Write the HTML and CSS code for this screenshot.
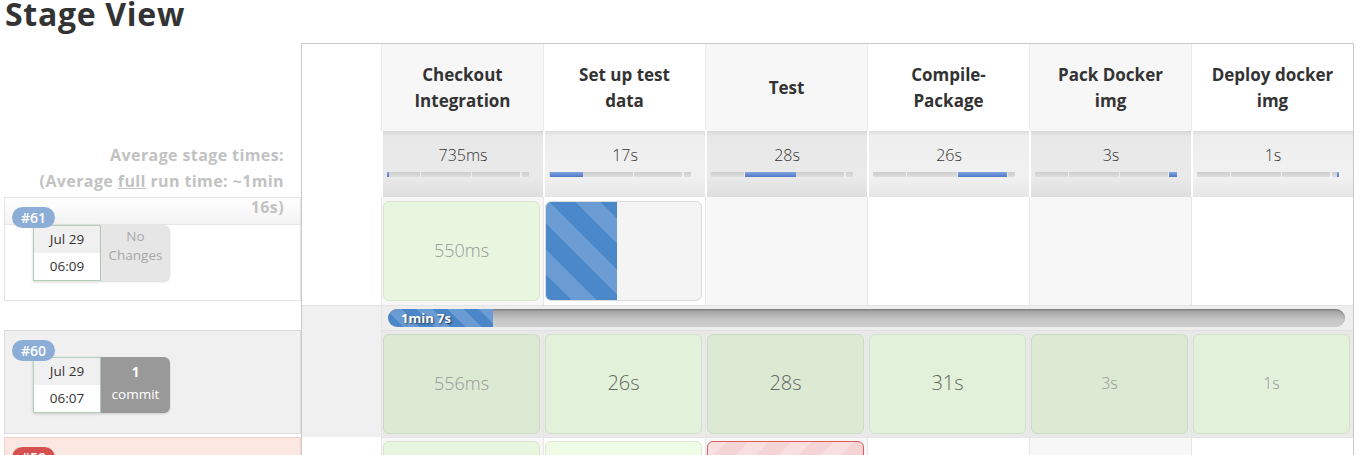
FILE: index.html
```html
<!DOCTYPE html>
<html lang="en">
<head>
<meta charset="utf-8">
<title>Stage View</title>
<link rel="stylesheet" href="styles.css">
</head>
<body>
<h2 class="title">Stage View</h2>
<div class="stage-view">
  <div class="builds">
    <div class="builds-head"></div>
    <div class="avg-label">Average stage times:<br>(Average <u>full</u> run time: ~1min<br>16s)</div>

    <div class="build build-current">
      <span class="badge badge-blue">#61</span>
      <div class="build-band"></div>
      <div class="build-info">
        <div class="date"><div class="day">Jul 29</div><div class="time">06:09</div></div>
        <div class="changes changes-none">No<br>Changes</div>
      </div>
    </div>

    <div class="build build-selected">
      <span class="badge badge-blue">#60</span>
      <div class="build-band"></div>
      <div class="build-info">
        <div class="date"><div class="day">Jul 29</div><div class="time">06:07</div></div>
        <div class="changes changes-some"><b>1</b><br>commit</div>
      </div>
    </div>

    <div class="build build-failed">
      <span class="badge badge-red">#59</span>
      <div class="build-band"></div>
    </div>
  </div>

  <div class="table">
    <!-- header -->
    <div class="lead"></div>
    <div class="th odd">Checkout<br>Integration</div>
    <div class="th">Set up test<br>data</div>
    <div class="th odd">Test</div>
    <div class="th">Compile-<br>Package</div>
    <div class="th odd">Pack Docker<br>img</div>
    <div class="th">Deploy docker<br>img</div>

    <!-- averages -->
    <div class="lead"></div>
    <div class="avg odd">735ms<div class="bar"><span class="fill" style="margin-left:0px;width:2px"></span></div></div>
    <div class="avg">17s<div class="bar"><span class="fill" style="margin-left:1px;width:33px"></span></div></div>
    <div class="avg odd">28s<div class="bar"><span class="fill" style="margin-left:34px;width:51px"></span></div></div>
    <div class="avg">26s<div class="bar"><span class="fill" style="margin-left:85px;width:49px"></span></div></div>
    <div class="avg odd">3s<div class="bar"><span class="fill" style="margin-left:134px;width:8px"></span></div></div>
    <div class="avg">1s<div class="bar"><span class="fill" style="margin-left:140px;width:2px"></span></div></div>

    <!-- #61 -->
    <div class="lead"></div>
    <div class="cell odd"><div class="box ok light t-md t-faint">550ms</div></div>
    <div class="cell"><div class="box running"><span class="run-fill" style="width:71px"></span></div></div>
    <div class="cell odd"></div>
    <div class="cell"></div>
    <div class="cell odd"></div>
    <div class="cell"></div>

    <!-- progress -->
    <div class="lead lead-grey lead-prog"></div>
    <div class="prog-cell">
      <div class="progress"><div class="progress-fill" style="width:105px">1min 7s</div></div>
    </div>

    <!-- #60 -->
    <div class="lead lead-grey"></div>
    <div class="cell sel"><div class="box ok dark t-md t-faint">556ms</div></div>
    <div class="cell sel"><div class="box ok t-lg">26s</div></div>
    <div class="cell sel"><div class="box ok dark t-lg">28s</div></div>
    <div class="cell sel"><div class="box ok t-lg">31s</div></div>
    <div class="cell sel"><div class="box ok dark t-sm t-faint">3s</div></div>
    <div class="cell sel"><div class="box ok t-sm t-faint">1s</div></div>

    <!-- #59 -->
    <div class="lead"></div>
    <div class="cell last odd"><div class="box ok light"></div></div>
    <div class="cell last"><div class="box ok pale"></div></div>
    <div class="cell last odd"><div class="box failed"></div></div>
    <div class="cell last"></div>
    <div class="cell last odd"></div>
    <div class="cell last"></div>
  </div>
</div>
</body>
</html>
```

FILE: styles.css
```css
* { box-sizing: border-box; }

body {
  margin: 0;
  background: #fff;
  color: #333;
  font-family: "Open Sans", "Noto Sans", "Liberation Sans", sans-serif;
  overflow: hidden;
}

.title {
  margin: 0;
  height: 43px;
  padding-left: 5px;
  font-size: 32px;
  line-height: 27px;
  font-weight: 700;
  letter-spacing: 0.7px;
  color: #333;
}

.stage-view {
  display: flex;
  align-items: flex-start;
}

/* ---------- left build column ---------- */
.builds {
  width: 301px;
  flex: none;
}

.builds-head { height: 88px; }

.avg-label {
  position: relative;
  z-index: 1;
  height: 66px;
  padding: 11px 17px 0 0;
  text-align: right;
  white-space: nowrap;
  font-size: 16px;
  line-height: 26px;
  font-weight: 700;
  letter-spacing: 0.4px;
  color: #c2c2c2;
}

.build {
  position: relative;
  height: 104px;
  margin-left: 4px;
  border: 1px solid #e4e4e4;
  background: #fff;
}

.build-band { height: 26px; }

.build-current .build-band {
  height: 27px;
  background: linear-gradient(#fff, #f3f3f3);
  border-bottom: 1px solid #e6e6e6;
}

.build-current { margin-bottom: 29px; }

.build-selected {
  background: #f0f0f0;
  border-color: #dcdcdc;
  margin-bottom: 3px;
}

.build-failed {
  background: #fce8e3;
  border-color: #f1d3cc;
}

.badge {
  position: absolute;
  top: 9px;
  left: 7px;
  z-index: 2;
  height: 21px;
  padding: 0 9px;
  border-radius: 11px;
  color: #fff;
  font-size: 14px;
  line-height: 21px;
  font-weight: 600;
}

.badge-blue { background: #8badd6; }
.badge-red { background: #d65050; }

.build-info {
  display: flex;
  margin-left: 28px;
}

.date {
  width: 68px;
  height: 56px;
  border: 1px solid #b2d0bb;
  box-shadow: 0 1px 3px rgba(0,0,0,0.18);
  font-size: 13.5px;
  line-height: 27px;
  text-align: center;
  color: #333;
  background: #fff;
}

.day { height: 27px; background: #f0f0f0; }

.changes {
  width: 69px;
  height: 56px;
  border-radius: 0 6px 6px 0;
  text-align: center;
  font-size: 13.5px;
  box-shadow: 0 1px 2px rgba(0,0,0,0.15);
}

.changes-none {
  background: #e6e6e6;
  color: #a8a8a8;
  line-height: 19px;
  padding-top: 2px;
}

.changes-some {
  background: #999;
  color: #fff;
  line-height: 22px;
  padding-top: 4px;
}

/* ---------- table ---------- */
.table {
  display: grid;
  grid-template-columns: 79px repeat(6, 162px);
  grid-template-rows: 87px 66px 108px 25px 107px 108px;
  width: 1053px;
  border: 1px solid #cacaca;
  flex: none;
}

.lead { background: #fff; }
.lead-grey { background: #f0f0f0; }
.lead-prog { border-top: 1px solid #e4e4e4; }

.th {
  display: flex;
  align-items: center;
  justify-content: center;
  text-align: center;
  border-left: 1px solid #ebebeb;
  font-size: 17px;
  line-height: 26px;
  font-weight: 700;
  color: #333;
  background: #fff;
}

.th.odd { background: #f7f7f7; }

.avg {
  border-left: 2px solid #fff;
  padding-top: 12px;
  text-align: center;
  font-size: 16px;
  line-height: 24px;
  font-weight: 300;
  color: #333;
  background: linear-gradient(#dcdcdc 0, #eeeeee 5px, #f1f1f1 70%, #e6e6e6 100%);
}

.avg.odd {
  background: linear-gradient(#d6d6d6 0, #e8e8e8 5px, #eaeaea 70%, #dedede 100%);
}

.bar {
  display: flex;
  width: 142px;
  height: 5px;
  margin: 5px 0 0 4px;
  background:
    linear-gradient(90deg, transparent 23%, rgba(255,255,255,0.55) 23%, rgba(255,255,255,0.55) 24%, transparent 24%,
      transparent 59%, rgba(255,255,255,0.55) 59%, rgba(255,255,255,0.55) 60%, transparent 60%,
      transparent 94%, rgba(255,255,255,0.55) 94%, rgba(255,255,255,0.55) 95%, transparent 95%),
    linear-gradient(#cdcdcd, #dedede);
}

.fill {
  display: block;
  height: 5px;
  background: linear-gradient(#83a3e2, #5079c8);
}

.cell {
  border-left: 1px solid #e6e6e6;
  padding: 4px 3px 4px 1px;
  background: #fff;
}

.cell.odd { background: #f7f7f7; }

.cell.sel {
  background: #e9e9e9;
  border-top: 1px solid #e2e2e2;
  padding: 3px 3px 3px 1px;
}

.cell.last {
  border-top: 1px solid #e4e4e4;
  padding-top: 3px;
}

.box {
  height: 100px;
  border: 1px solid #d3e2ca;
  border-radius: 6px;
  display: flex;
  align-items: center;
  justify-content: center;
  padding-bottom: 3px;
  font-weight: 300;
  color: #666;
  background: #e2f1d9;
}

.box.light { background: #e8f6df; border-color: #d6e6cd; }
.box.pale { background: #effde7; border-color: #d9e8d0; }
.box.dark { background: #dce9d3; border-color: #cedbc5; }

.t-sm { font-size: 16px; }
.t-md { font-size: 18px; }
.t-lg { font-size: 20px; }
.t-faint { color: #999; }

.box.running {
  justify-content: flex-start;
  align-items: stretch;
  overflow: hidden;
  padding-bottom: 0;
  background: #f4f4f4;
  border-color: #dcdcdc;
}

.run-fill {
  display: block;
  background: repeating-linear-gradient(45deg, #4a88ca 0 18px, #6b9cd4 18px 36px);
}

.box.failed {
  border-color: #de5a5a;
  background: repeating-linear-gradient(-45deg, #f4d4d4 0 16px, #f8e0e0 16px 30px);
}

.prog-cell {
  grid-column: span 6;
  border-left: 1px solid #e6e6e6;
  border-top: 1px solid #e4e4e4;
  background: #eeeeee;
  padding: 3px 8px 3px 6px;
}

.progress {
  height: 18px;
  border-radius: 9px;
  overflow: hidden;
  background: linear-gradient(#9c9c9c, #c6c6c6 60%, #d0d0d0);
  box-shadow: inset 0 1px 2px rgba(0,0,0,0.25);
}

.progress-fill {
  height: 18px;
  border-radius: 9px 0 0 9px;
  padding-left: 13px;
  background: repeating-linear-gradient(45deg, #4a86c8 0 11px, #6b9bd3 11px 22px);
  color: #fff;
  font-size: 13px;
  line-height: 18px;
  font-weight: 700;
  white-space: nowrap;
  text-shadow: 1px 1px 2px rgba(0,0,0,0.6);
}
```
